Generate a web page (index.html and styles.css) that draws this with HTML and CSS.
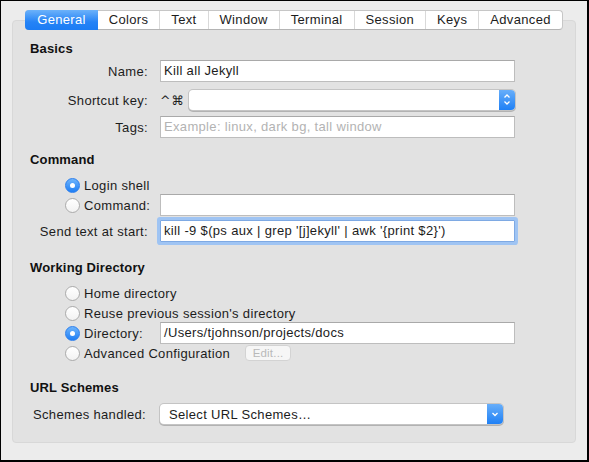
FILE: index.html
```html
<!DOCTYPE html>
<html>
<head>
<meta charset="utf-8">
<link rel="stylesheet" href="styles.css">
</head>
<body>
<div class="window">
  <div class="tabs">
    <div class="tab active">General</div>
    <div class="tab">Colors</div>
    <div class="tab">Text</div>
    <div class="tab">Window</div>
    <div class="tab">Terminal</div>
    <div class="tab">Session</div>
    <div class="tab">Keys</div>
    <div class="tab">Advanced</div>
  </div>
  <div class="panel">
    <div class="heading">Basics</div>
    <div class="row mt2">
      <span class="lbl">Name:</span>
      <div class="field">Kill all Jekyll</div>
    </div>
    <div class="row mt7">
      <span class="lbl">Shortcut key:</span>
      <span class="keys">^⌘</span>
      <div class="popup stepper">
        <div class="popup-btn">
          <svg width="16" height="21" viewBox="0 0 16 21"><path d="M5.5 8.5 L8 6 L10.5 8.5" fill="none" stroke="#fff" stroke-width="1.3"/><path d="M5.5 12.5 L8 15 L10.5 12.5" fill="none" stroke="#fff" stroke-width="1.3"/></svg>
        </div>
      </div>
    </div>
    <div class="row mt5">
      <span class="lbl">Tags:</span>
      <div class="field placeholder">Example: linux, dark bg, tall window</div>
    </div>

    <div class="heading mt13">Command</div>
    <div class="radio-row mt6">
      <span class="radio on"></span><span>Login shell</span>
    </div>
    <div class="radio-row">
      <span class="opt"><span class="radio"></span><span>Command:</span></span>
      <div class="field"></div>
    </div>
    <div class="row row-focus mt3">
      <span class="lbl">Send text at start:</span>
      <div class="field focused">kill -9 $(ps aux | grep '[j]ekyll' | awk '{print $2}')</div>
    </div>

    <div class="heading mt15">Working Directory</div>
    <div class="radio-row mt6">
      <span class="radio"></span><span>Home directory</span>
    </div>
    <div class="radio-row">
      <span class="radio"></span><span>Reuse previous session's directory</span>
    </div>
    <div class="radio-row">
      <span class="opt"><span class="radio on"></span><span>Directory:</span></span>
      <div class="field">/Users/tjohnson/projects/docs</div>
    </div>
    <div class="radio-row">
      <span class="radio"></span><span>Advanced Configuration</span>
      <span class="btn-edit">Edit...</span>
    </div>

    <div class="heading mt16">URL Schemes</div>
    <div class="row mt6">
      <span class="lbl lbl-schemes">Schemes handled:</span>
      <div class="popup select">
        <span class="select-text">Select URL Schemes…</span>
        <div class="popup-btn">
          <svg width="16" height="20" viewBox="0 0 16 20"><path d="M5.5 9 L8 11.5 L10.5 9" fill="none" stroke="#fff" stroke-width="1.3"/></svg>
        </div>
      </div>
    </div>
  </div>
</div>
</body>
</html>
```

FILE: styles.css
```css
html, body {
  margin: 0;
  padding: 0;
}

body {
  font-family: "Liberation Sans", Arial, "DejaVu Sans", sans-serif;
  font-size: 13px;
  letter-spacing: 0.33px;
  color: #1c1c1c;
}

.window {
  width: 589px;
  height: 462px;
  box-sizing: border-box;
  border: 1px solid #000;
  border-right-width: 2px;
  border-bottom-width: 2px;
  background: #ececec;
  padding-top: 9px;
  overflow: hidden;
}

/* Tabs */
.tabs {
  position: relative;
  z-index: 1;
  display: flex;
  width: max-content;
  margin: 0 auto;
  height: 18px;
  background: #fff;
  border: 1px solid #c6c6c6;
  border-bottom-color: #b4b4b4;
  border-radius: 4px;
}

.tab {
  padding: 0 11px;
  line-height: 18px;
  color: #1c1c1c;
  white-space: nowrap;
}

.tab + .tab {
  border-left: 1px solid #d9d9d9;
}

.tab.active {
  margin: -1px 0 -1px -1px;
  padding: 0 12px;
  line-height: 20px;
  color: #fff;
  background: linear-gradient(#6cb2fa, #2583f6 60%, #1b7cf4);
  border-radius: 4px 0 0 4px;
}

.tab.active + .tab {
  border-left: none;
}

/* Panel */
.panel {
  width: 564px;
  box-sizing: border-box;
  margin: -10px 0 0 11px;
  padding: 19px 0 17px 0;
  background: #e2e2e2;
  border: 1px solid #d8d8d8;
  border-radius: 4px;
}

.heading {
  height: 18px;
  line-height: 18px;
  font-weight: bold;
  letter-spacing: 0.15px;
  padding-left: 17px;
  color: #111;
}

.row {
  display: flex;
  align-items: center;
  height: 22px;
}

.row-focus {
  height: 26px;
}

.lbl {
  width: 135px;
  margin-right: 12px;
  text-align: right;
  white-space: nowrap;
}

.lbl-schemes {
  width: 133px;
  margin-right: 14px;
}

.field {
  box-sizing: border-box;
  width: 355px;
  height: 22px;
  padding: 0 3px;
  line-height: 20px;
  background: #fff;
  border: 1px solid #bdbdbd;
  border-top-color: #a9a9a9;
  white-space: nowrap;
  overflow: hidden;
}

.placeholder {
  color: #b3b3b3;
}

.focused {
  border-color: #7ea9e3;
  box-shadow: 0 0 0 3px #9fc4f3;
  border-radius: 1px;
}

.keys {
  width: 29px;
  font-family: "DejaVu Sans", "Liberation Sans", sans-serif;
  font-size: 12.5px;
  letter-spacing: 1px;
}

/* Popups */
.popup {
  box-sizing: border-box;
  display: flex;
  justify-content: flex-end;
  background: #fff;
  border-radius: 4px;
  box-shadow: 0 0 0 1px #c4c4c4, 0 1px 0 1px #b2b2b2;
  overflow: hidden;
}

.stepper {
  width: 326px;
  height: 20px;
  margin-top: -1px;
}

.select {
  width: 343px;
  height: 20px;
  justify-content: space-between;
  align-items: center;
}

.select-text {
  padding-left: 9px;
}

.popup-btn {
  width: 16px;
  align-self: stretch;
  display: flex;
  align-items: center;
  justify-content: center;
  background: linear-gradient(#67aefa, #1f80f5);
}

/* Radios */
.radio-row {
  display: flex;
  align-items: center;
  height: 20px;
  padding-left: 52px;
  white-space: nowrap;
}

.opt {
  display: flex;
  align-items: center;
  width: 83px;
  margin-right: 12px;
}

.radio {
  flex: none;
  box-sizing: border-box;
  width: 15px;
  height: 15px;
  margin-right: 4px;
  border-radius: 50%;
  border: 1px solid #ababab;
  background: linear-gradient(#ffffff, #f2f2f2);
  display: flex;
  align-items: center;
  justify-content: center;
}

.radio.on {
  border-color: #2c7fee;
  background: linear-gradient(#6eb4fb, #1e7ef5);
}

.radio.on::after {
  content: "";
  width: 5px;
  height: 5px;
  border-radius: 50%;
  background: #fff;
}

.btn-edit {
  box-sizing: border-box;
  width: 46px;
  height: 16px;
  margin-left: 15px;
  line-height: 14px;
  text-align: center;
  font-size: 11.5px;
  letter-spacing: 0.2px;
  color: #b9b9b9;
  background: #f6f6f6;
  border: 1px solid #d3d3d3;
  border-radius: 4px;
}

.mt2 { margin-top: 2px; }
.mt3 { margin-top: 3px; }
.mt5 { margin-top: 5px; }
.mt6 { margin-top: 6px; }
.mt7 { margin-top: 7px; }
.mt13 { margin-top: 13px; }
.mt15 { margin-top: 15px; }
.mt16 { margin-top: 16px; }
```
